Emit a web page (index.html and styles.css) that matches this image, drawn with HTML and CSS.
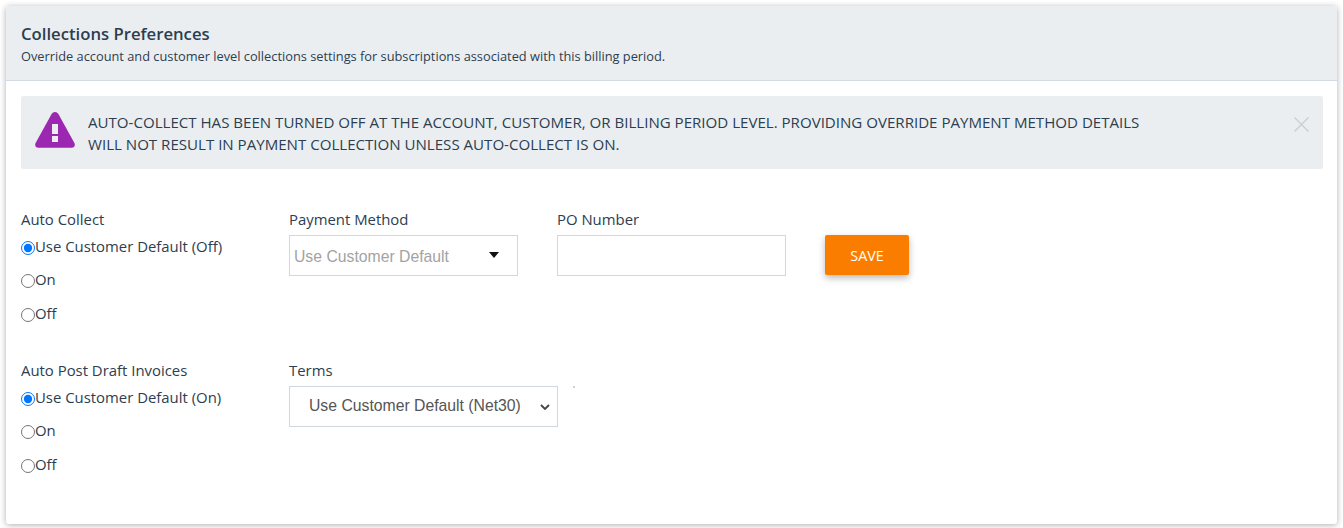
FILE: index.html
```html
<!DOCTYPE html>
<html lang="en">
<head>
<meta charset="utf-8">
<title>Collections Preferences</title>
<link rel="stylesheet" href="styles.css">
</head>
<body>
<section class="card">
  <header class="card-header">
    <h2 class="card-title">Collections Preferences</h2>
    <p class="card-sub">Override account and customer level collections settings for subscriptions associated with this billing period.</p>
  </header>
  <div class="card-body">
    <div class="alert">
      <svg class="alert-icon" viewBox="0 0 40 36" width="40" height="36" aria-hidden="true">
        <path fill="#9c27b0" fill-rule="evenodd" d="M20 0c1.500 0 2.600.8 3.400 2.100l16 29c1.200 2.300-.2 4.700-2.800 4.700H3.400C.8 35.800-.6 33.400.6 31.100l16-29C17.400.8 18.500 0 20 0zM17 12v10h6V12h-6zm0 12v6h6v-6h-6z"/>
      </svg>
      <p class="alert-text">AUTO-COLLECT HAS BEEN TURNED OFF AT THE ACCOUNT, CUSTOMER, OR BILLING PERIOD LEVEL. PROVIDING OVERRIDE PAYMENT METHOD DETAILS WILL NOT RESULT IN PAYMENT COLLECTION UNLESS AUTO-COLLECT IS ON.</p>
      <svg class="alert-close" viewBox="0 0 15 15" width="15" height="15" aria-hidden="true">
        <path d="M.5.5l14 14M14.500.5l-14 14" stroke="#c9cdd1" stroke-width="1.300" fill="none"/>
      </svg>
    </div>
    <div class="form-row row-first">
      <fieldset class="radios">
        <div class="label">Auto Collect</div>
        <label class="radio"><input type="radio" name="collect" checked>Use Customer Default (Off)</label>
        <label class="radio"><input type="radio" name="collect">On</label>
        <label class="radio"><input type="radio" name="collect">Off</label>
      </fieldset>
      <div class="field field-pay">
        <div class="label">Payment Method</div>
        <div class="fake-select">
          <span class="select-text">Use Customer Default</span>
          <i class="caret"></i>
        </div>
      </div>
      <div class="field field-po">
        <div class="label">PO Number</div>
        <input class="text-input" type="text">
      </div>
      <button class="save" type="button">SAVE</button>
    </div>
    <div class="form-row row-second">
      <fieldset class="radios">
        <div class="label">Auto Post Draft Invoices</div>
        <label class="radio"><input type="radio" name="post" checked>Use Customer Default (On)</label>
        <label class="radio"><input type="radio" name="post">On</label>
        <label class="radio"><input type="radio" name="post">Off</label>
      </fieldset>
      <div class="field">
        <div class="label">Terms</div>
        <div class="terms-wrap">
          <div class="terms-select">
            <span class="terms-text">Use Customer Default (Net30)</span>
            <svg class="chev" viewBox="0 0 10 6" width="10" height="6" aria-hidden="true"><path d="M1 1l4 4 4-4" fill="none" stroke="#444" stroke-width="1.800"/></svg>
          </div>
          <i class="speck"></i>
        </div>
      </div>
    </div>
  </div>
</section>
</body>
</html>
```

FILE: styles.css
```css
* { box-sizing: border-box; }
html, body { height: 100%; }
body {
  margin: 0;
  padding: 6px;
  background: #fff;
  font-family: "Open Sans", "Noto Sans", sans-serif;
  font-size: 14.900px;
  color: #2c3e50;
  overflow: hidden;
}
.card {
  width: 1331px;
  height: 518px;
  background: #fff;
  border-radius: 3px;
  box-shadow: 0 1px 6px rgba(0, 0, 0, .32);
}
.card-header {
  height: 75px;
  padding: 15px 15px 0;
  background: #ebeef1;
  border-bottom: 1px solid #d3dae1;
  border-radius: 3px 3px 0 0;
}
.card-title {
  margin: 0;
  font-size: 16.700px;
  line-height: 25px;
  font-weight: 600;
}
.card-sub {
  margin: 1px 0 0;
  font-size: 12.800px;
  line-height: 18px;
}
.card-body { padding: 15px 14px 0 15px; }
.alert {
  display: flex;
  align-items: flex-start;
  height: 73px;
  padding: 15px 14px 0 14px;
  background: #ebeef1;
  border-radius: 2px;
}
.alert-icon { flex: none; margin-top: 1px; }
.alert-text {
  width: 1065px;
  margin: 0 0 0 13px;
  font-size: 15.090px;
  line-height: 22px;
}
.alert-close { flex: none; margin: 6px 0 0 auto; }
.form-row { display: flex; align-items: flex-start; }
.row-first { margin-top: 40px; height: 151px; }
.label { line-height: 20px; }
.radios { width: 268px; margin: 0; padding: 0; border: 0; }
.radio {
  display: flex;
  align-items: center;
  height: 33.500px;
  line-height: 20px;
}
.radio input { width: 14px; height: 14px; margin: 4px 0 0 0; flex: none; }
.field-pay { width: 268px; }
.field-po { width: 268px; }
.fake-select, .text-input, .terms-select {
  display: flex;
  align-items: center;
  height: 41px;
  margin-top: 6px;
  background: #fff;
  border: 1px solid #ced8de;
  font-family: "Liberation Sans", Arial, sans-serif;
  font-size: 15.750px;
}
.fake-select {
  justify-content: space-between;
  width: 229px;
  padding: 0 18px 0 4px;
  color: #a3a3a3;
}
.select-text { margin-top: 3px; }
.terms-text { margin-top: -1px; }
.caret {
  width: 0;
  height: 0;
  margin-top: -1px;
  border-left: 5.500px solid transparent;
  border-right: 5.500px solid transparent;
  border-top: 6px solid #111;
}
.text-input { width: 229px; padding: 0 8px; }
.save {
  width: 84px;
  height: 40px;
  margin-top: 26px;
  background: #fb7d00;
  border: 0;
  border-radius: 2px;
  color: #fff;
  font-family: inherit;
  font-size: 14.300px;
  box-shadow: 0 3px 7px rgba(0, 0, 0, .28);
}
.terms-wrap { display: flex; align-items: flex-start; }
.terms-select {
  justify-content: space-between;
  width: 269px;
  padding: 0 7px 0 19px;
  color: #555;
}
.chev { margin-top: 1px; }
.speck {
  width: 2px;
  height: 2px;
  margin: 6px 0 0 15px;
  background: #cfd3d6;
}
```
